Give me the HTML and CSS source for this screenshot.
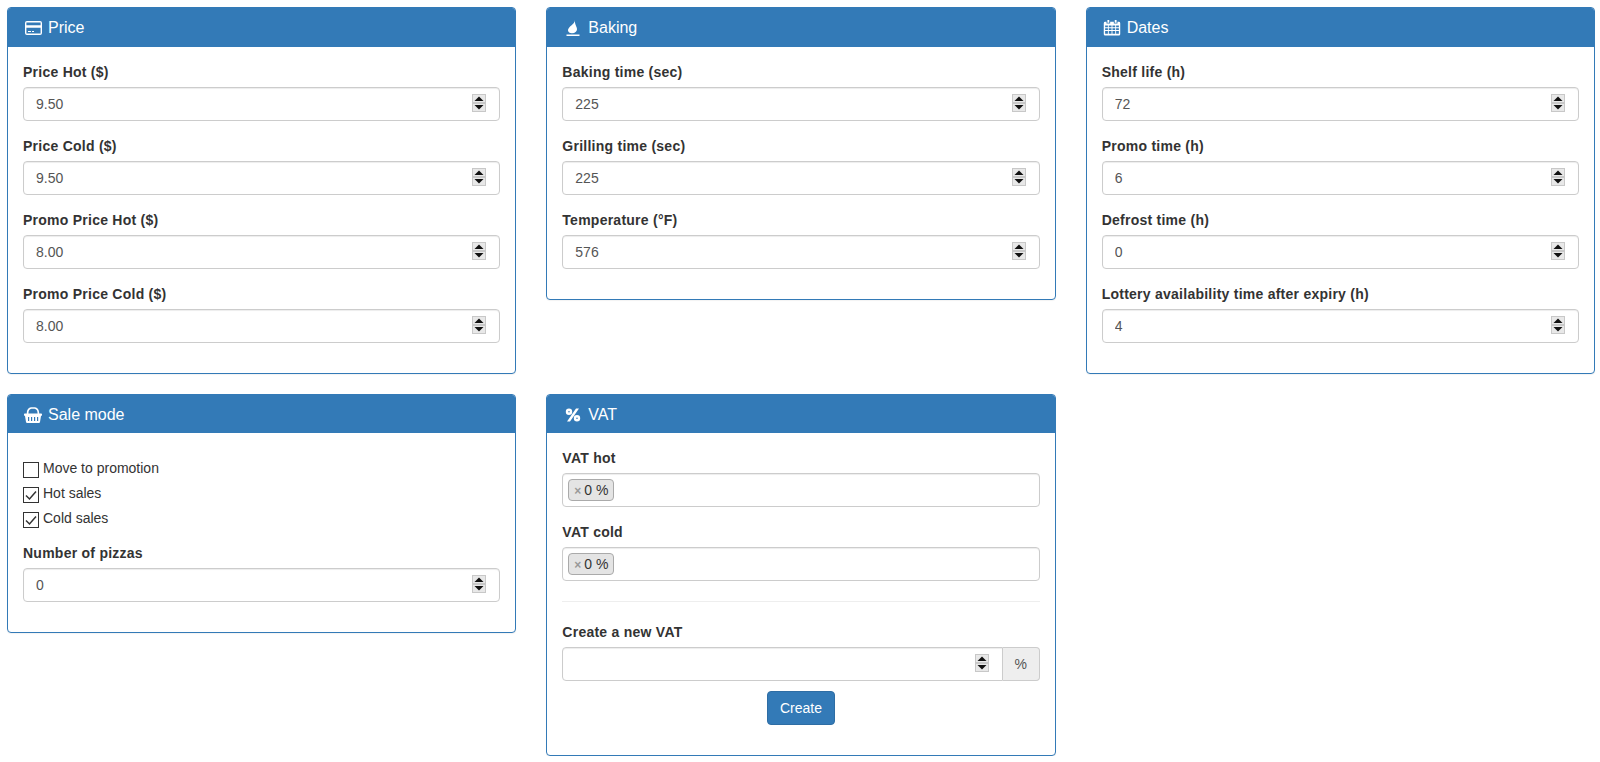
FILE: index.html
```html
<!DOCTYPE html>
<html lang="en">
<head>
<meta charset="utf-8">
<title>Settings</title>
<link rel="stylesheet" href="styles.css">
</head>
<body>
<svg class="defs" width="0" height="0" aria-hidden="true">
  <symbol id="spin" viewBox="0 0 14 18">
    <rect x=".5" y=".5" width="13" height="8" fill="#e8e8e8" stroke="#c8c8c8"/>
    <rect x=".5" y="9.5" width="13" height="8" fill="#e8e8e8" stroke="#c8c8c8"/>
    <path d="M7 2.500 11.500 7h-9z" fill="#111"/>
    <path d="M7 15.500 11.500 11h-9z" fill="#111"/>
  </symbol>
  <symbol id="check" viewBox="0 0 14 14">
    <path d="M2 7.500 5.500 11 12 3.500" fill="none" stroke="#333" stroke-width="1.5"/>
  </symbol>
</svg>
<main class="grid">
  <section class="panel">
    <h3 class="heading">
      <svg class="icon" viewBox="0 0 18 16"><path fill="#fff" fill-rule="evenodd" d="M3 1h13a2 2 0 0 1 2 2v10a2 2 0 0 1-2 2H3a2 2 0 0 1-2-2V3a2 2 0 0 1 2-2zm-.6 1.400v2.800h14.200V2.400zm0 5.400v5.800h14.200V7.800zM4 11h3v1H4zm4 0h2v1H8z"/></svg>
      <span>Price</span>
    </h3>
    <div class="body">
      <div class="field"><label>Price Hot ($)</label><div class="num"><input class="control" type="text" value="9.50"><svg class="spin"><use href="#spin"/></svg></div></div>
      <div class="field"><label>Price Cold ($)</label><div class="num"><input class="control" type="text" value="9.50"><svg class="spin"><use href="#spin"/></svg></div></div>
      <div class="field"><label>Promo Price Hot ($)</label><div class="num"><input class="control" type="text" value="8.00"><svg class="spin"><use href="#spin"/></svg></div></div>
      <div class="field"><label>Promo Price Cold ($)</label><div class="num"><input class="control" type="text" value="8.00"><svg class="spin"><use href="#spin"/></svg></div></div>
    </div>
  </section>
  <section class="panel">
    <h3 class="heading wide">
      <svg class="icon" viewBox="0 0 18 16"><path fill="#fff" d="M10.500 0c.4 2.300-1 3.700-2.900 5.300C5.400 7.200 3.800 8.700 4 10.500c.2 1.500 1.500 2.800 4 2.800 3 0 5-1.700 5-4 0-1.500-.7-2.600-1.100-3.800C11.400 4.200 10.700 2.200 10.500 0zM2.500 14.500h13V16h-13z"/></svg>
      <span>Baking</span>
    </h3>
    <div class="body">
      <div class="field"><label>Baking time (sec)</label><div class="num"><input class="control" type="text" value="225"><svg class="spin"><use href="#spin"/></svg></div></div>
      <div class="field"><label>Grilling time (sec)</label><div class="num"><input class="control" type="text" value="225"><svg class="spin"><use href="#spin"/></svg></div></div>
      <div class="field"><label>Temperature (°F)</label><div class="num"><input class="control" type="text" value="576"><svg class="spin"><use href="#spin"/></svg></div></div>
    </div>
  </section>
  <section class="panel">
    <h3 class="heading">
      <svg class="icon" viewBox="0 0 18 17.500"><path fill="#fff" fill-rule="evenodd" d="M4 0h2v3H4zM12 0h2v3h-2zM1.500 2H3v1.800h4V2h4v1.800h4V2h1.500A1.500 1.500 0 0 1 18 3.500v12a1.500 1.500 0 0 1-1.500 1.500h-15A1.500 1.500 0 0 1 0 15.500v-12A1.500 1.500 0 0 1 1.500 2zM1.500 6v2h3V6zm4 0v2h3V6zm4 0v2h3V6zm4 0v2h3V6zm-12 3v2h3V9zm4 0v2h3V9zm4 0v2h3V9zm4 0v2h3V9zm-12 3v3h3v-3zm4 0v3h3v-3zm4 0v3h3v-3zm4 0v3h3v-3z"/></svg>
      <span>Dates</span>
    </h3>
    <div class="body">
      <div class="field"><label>Shelf life (h)</label><div class="num"><input class="control" type="text" value="72"><svg class="spin"><use href="#spin"/></svg></div></div>
      <div class="field"><label>Promo time (h)</label><div class="num"><input class="control" type="text" value="6"><svg class="spin"><use href="#spin"/></svg></div></div>
      <div class="field"><label>Defrost time (h)</label><div class="num"><input class="control" type="text" value="0"><svg class="spin"><use href="#spin"/></svg></div></div>
      <div class="field"><label>Lottery availability time after expiry (h)</label><div class="num"><input class="control" type="text" value="4"><svg class="spin"><use href="#spin"/></svg></div></div>
    </div>
  </section>
  <section class="panel">
    <h3 class="heading">
      <svg class="icon" viewBox="0 0 18 16"><path fill="#fff" fill-rule="evenodd" d="M2.800 6.500C2.800 2.500 4.800.5 7 .3h4c2.200.2 4.200 2.200 4.200 6.200h-1.600c0-3-1.400-4.500-3-4.700H7.400c-1.600.2-3 1.700-3 4.700zM.8 6.500h16.400c.5 0 .8.400.8.800v.8c0 .4-.3.800-.8.800h-.2l-1 6c-.1.600-.5 1-1.100 1H3.100c-.6 0-1-.4-1.100-1l-1-6H.8c-.5 0-.8-.4-.8-.8v-.8c0-.4.300-.8.800-.8zM4 10v4h1.200v-4zm3 0v4h1.200v-4zm3 0v4h1.200v-4zm3 0v4h1.200v-4z"/></svg>
      <span>Sale mode</span>
    </h3>
    <div class="body">
      <div class="checks">
        <div class="check"><span class="box"></span><span>Move to promotion</span></div>
        <div class="check"><span class="box"><svg class="tick"><use href="#check"/></svg></span><span>Hot sales</span></div>
        <div class="check"><span class="box"><svg class="tick"><use href="#check"/></svg></span><span>Cold sales</span></div>
      </div>
      <div class="field"><label>Number of pizzas</label><div class="num"><input class="control" type="text" value="0"><svg class="spin"><use href="#spin"/></svg></div></div>
    </div>
  </section>
  <section class="panel">
    <h3 class="heading wide">
      <svg class="icon" viewBox="0 0 18 16"><path fill="#fff" fill-rule="evenodd" d="M12 1.500h3L6 14.500H3zM5 1.500a3.200 3.200 0 1 1 0 6.400 3.200 3.200 0 0 1 0-6.400zm0 2.400a.8.8 0 1 0 0 1.600.8.8 0 0 0 0-1.600zM13 8.100a3.200 3.200 0 1 1 0 6.400 3.200 3.200 0 0 1 0-6.400zm0 2.400a.8.8 0 1 0 0 1.600.8.8 0 0 0 0-1.600z"/></svg>
      <span>VAT</span>
    </h3>
    <div class="body">
      <div class="field"><label>VAT hot</label><div class="control tags"><span class="tag"><span class="x">×</span>0 %</span></div></div>
      <div class="field"><label>VAT cold</label><div class="control tags"><span class="tag"><span class="x">×</span>0 %</span></div></div>
      <hr class="rule">
      <div class="field tight"><label>Create a new VAT</label>
        <div class="group">
          <div class="num grow"><input class="control joined" type="text" value=""><svg class="spin"><use href="#spin"/></svg></div>
          <span class="addon">%</span>
        </div>
      </div>
      <div class="actions"><button class="btn" type="button">Create</button></div>
    </div>
  </section>
</main>
</body>
</html>
```
FILE: styles.css
```css
* { box-sizing: border-box; }
html, body { margin: 0; padding: 0; background: #fff; }
body {
  padding: 7px 5px 0 7px;
  font-family: "Liberation Sans", Arial, sans-serif;
  font-size: 14px;
  line-height: 20px;
  color: #333;
}
.defs { position: absolute; }
.grid {
  display: grid;
  grid-template-columns: repeat(3, 1fr);
  column-gap: 30px;
  row-gap: 20px;
  align-items: start;
}
.panel {
  border: 1px solid #337ab7;
  border-radius: 4px;
  background: #fff;
  box-shadow: 0 1px 1px rgba(0, 0, 0, .05);
}
.heading {
  display: flex;
  align-items: center;
  margin: 0;
  padding: 11px 15px 9px;
  height: 38.6px;
  background: #337ab7;
  color: #fff;
  font-size: 16px;
  font-weight: 400;
  line-height: 18px;
  border-radius: 3px 3px 0 0;
}
.icon { width: 18px; height: 16px; margin: 0 6px 0 1px; flex: none; }
.wide .icon { margin-left: 2px; }
.body { padding: 15px; }
.field { margin-bottom: 15px; }
.field.tight { margin-bottom: 10px; }
.field label { display: block; margin-bottom: 5px; font-weight: 700; letter-spacing: .25px; }
.num { position: relative; }
.control {
  display: block;
  width: 100%;
  height: 34px;
  padding: 6px 12px;
  border: 1px solid #ccc;
  border-radius: 4px;
  background: #fff;
  box-shadow: inset 0 1px 1px rgba(0, 0, 0, .075);
  color: #555;
  font: 14px/20px "Liberation Sans", Arial, sans-serif;
}
.spin {
  position: absolute;
  right: 14px;
  top: 7px;
  width: 14px;
  height: 18px;
}
.checks { padding-top: 10px; margin-bottom: 10px; }
.check { display: flex; align-items: flex-start; height: 25px; }
.box {
  width: 16px;
  height: 16px;
  margin: 4px 4px 0 0;
  border: 1px solid #333;
  background: #fff;
  flex: none;
  display: block;
}
.tick { display: block; width: 14px; height: 14px; }
.tags { display: flex; align-items: center; padding: 0 5px; }
.tag {
  display: inline-block;
  height: 22px;
  padding: 0 5px;
  border: 1px solid #aaa;
  border-radius: 4px;
  background: #e4e4e4;
  color: #333;
  line-height: 20px;
}
.x { color: #999; font-weight: 700; font-size: 12px; margin-right: 3px; }
.rule { margin: 20px 0; border: 0; border-top: 1px solid #eee; }
.group { display: flex; }
.grow { flex: 1; }
.joined { border-radius: 4px 0 0 4px; }
.addon {
  width: 37px;
  height: 34px;
  border: 1px solid #ccc;
  border-left: 0;
  border-radius: 0 4px 4px 0;
  background: #eee;
  color: #555;
  text-align: center;
  line-height: 32px;
}
.actions { display: flex; justify-content: center; margin-bottom: 15px; }
.btn {
  height: 34px;
  padding: 6px 12px;
  border: 1px solid #2e6da4;
  border-radius: 4px;
  background: #337ab7;
  color: #fff;
  font: 14px/20px "Liberation Sans", Arial, sans-serif;
}
```
